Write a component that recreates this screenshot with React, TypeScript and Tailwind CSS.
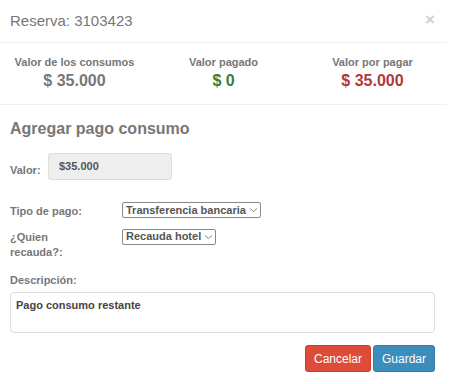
export default function App() {
  return (
    <div className="w-[454px] h-[384px] bg-white font-['Liberation_Sans',Arial,sans-serif] text-[#333] overflow-hidden">
      <div className="w-[447px]">
        <div className="flex items-center justify-between h-[43px] pl-[10px] pr-[12px] border-b border-[#f0f0f0]">
          <h4 className="text-[15px] text-[#777]">Reserva: 3103423</h4>
          <span className="text-[17px] font-bold text-[#d0d0d0] leading-none -mt-[4px]">×</span>
        </div>
        <div className="grid grid-cols-3 h-[62px] border-b border-[#f0f0f0] pt-[12px] text-center">
          <div>
            <div className="text-[11px] leading-[14px] font-bold text-[#777]">Valor de los consumos</div>
            <div className="text-[16px] leading-[20px] font-bold text-[#777] mt-[2px]">$ 35.000</div>
          </div>
          <div>
            <div className="text-[11px] leading-[14px] font-bold text-[#777]">Valor pagado</div>
            <div className="text-[16px] leading-[20px] font-bold text-[#3a7d3a] mt-[2px]">$ 0</div>
          </div>
          <div>
            <div className="text-[11px] leading-[14px] font-bold text-[#777]">Valor por pagar</div>
            <div className="text-[16px] leading-[20px] font-bold text-[#b03a3a] mt-[2px]">$ 35.000</div>
          </div>
        </div>
        <div className="px-[10px] pt-[12px]">
          <h3 className="text-[16px] font-bold text-[#777]">Agregar pago consumo</h3>
          <div className="flex items-center mt-[12px]">
            <label className="text-[11px] font-bold text-[#777] w-[38px] mt-[8px]">Valor:</label>
            <div className="w-[124px] h-[27px] bg-[#eee] border border-[#ddd] rounded-[3px] flex items-center pl-[10px] text-[11px] font-bold text-[#555]">
              $35.000
            </div>
          </div>
          <div className="flex items-start mt-[22px]">
            <label className="text-[11px] font-bold text-[#777] w-[112px] pt-[1px]">Tipo de pago:</label>
            <div className="h-[16px] border border-[#888] rounded-[2px] flex items-center pl-[3px] pr-[2px] text-[11px] font-bold text-[#555]">
              Transferencia bancaria
              <svg width="9" height="6" viewBox="0 0 9 6" className="ml-[3px]"><path d="M1 1.5 L4.5 4.5 L8 1.5" fill="none" stroke="#888" strokeWidth="1" /></svg>
            </div>
          </div>
          <div className="flex items-start mt-[9px]">
            <label className="text-[11px] font-bold text-[#777] w-[112px] leading-[15px] pt-[1px]">¿Quien<br />recauda?:</label>
            <div className="h-[16px] border border-[#888] rounded-[2px] flex items-center pl-[3px] pr-[2px] text-[11px] font-bold text-[#555]">
              Recauda hotel
              <svg width="9" height="6" viewBox="0 0 9 6" className="ml-[3px]"><path d="M1 1.5 L4.5 4.5 L8 1.5" fill="none" stroke="#888" strokeWidth="1" /></svg>
            </div>
          </div>
          <div className="text-[11px] font-bold text-[#777] mt-[12px]">Descripción:</div>
          <div className="mt-[4px] w-[425px] h-[41px] border border-[#ddd] rounded-[4px] px-[5px] pt-[4px] text-[11px] font-bold text-[#444]">
            Pago consumo restante
          </div>
          <div className="flex justify-end gap-[2px] mt-[12px] w-[425px]">
            <button className="w-[66px] h-[27px] bg-[#dd4b39] border border-[#d73925] rounded-[3px] text-white text-[12px]">Cancelar</button>
            <button className="w-[62px] h-[27px] bg-[#3c8dbc] border border-[#367fa9] rounded-[3px] text-white text-[12px]">Guardar</button>
          </div>
        </div>
      </div>
    </div>
  )
}
